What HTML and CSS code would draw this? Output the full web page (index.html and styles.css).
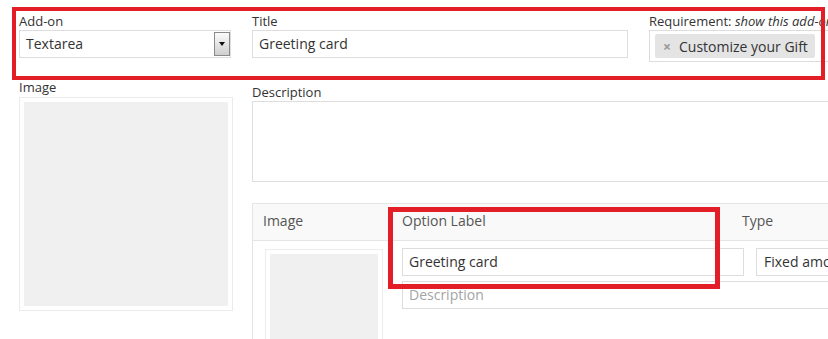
FILE: index.html
```html
<!DOCTYPE html>
<html lang="en">
<head>
  <meta charset="UTF-8" />
  <title>Product Add-ons</title>
  <link rel="stylesheet" href="styles.css">
</head>
<body>
  <div class="page">
    <div class="fila-top">
      <div class="campo campo-addon">
        <label>Add-on</label>
        <div class="select">
          <span>Textarea</span>
          <span class="flecha"><i></i></span>
        </div>
      </div>
      <div class="campo campo-title">
        <label>Title</label>
        <input type="text" value="Greeting card">
      </div>
      <div class="campo campo-req">
        <label>Requirement: <em>show this add-on if any of these are selected</em></label>
        <div class="tags">
          <span class="tag"><b>×</b>Customize your Gift</span>
        </div>
      </div>
    </div>

    <div class="fila-main">
      <div class="col-image">
        <label>Image</label>
        <div class="imgbox"><div></div></div>
      </div>
      <div class="col-main">
        <label>Description</label>
        <textarea></textarea>

        <!-- tabla de opciones -->
        <div class="opciones">
          <div class="opciones-head">
            <span class="th-img">Image</span>
            <span class="th-label">Option Label</span>
            <span>Type</span>
          </div>
          <div class="opciones-body">
            <div class="imgbox mini"><div></div></div>
            <div class="opcion-campos">
              <div class="opcion-fila">
                <input type="text" class="opcion-label" value="Greeting card">
                <div class="select tipo"><span>Fixed amount</span></div>
              </div>
              <input type="text" class="opcion-desc" placeholder="Description">
            </div>
          </div>
        </div>
      </div>
    </div>
  </div>

  <div class="marca marca-1"></div>
  <div class="marca marca-2"></div>
</body>
</html>
```

FILE: styles.css
```css
body {
  margin: 0;
  width: 828px;
  height: 339px;
  overflow: hidden;
  background: #fff;
  font-family: "Open Sans", sans-serif;
  color: #333;
}
.page {
  padding: 14px 0 0 19px;
  width: 1200px;
}
label {
  display: block;
  font-size: 13px;
  line-height: 14px;
  padding-bottom: 2px;
  color: #333;
  white-space: nowrap;
}
input, textarea {
  box-sizing: border-box;
  font-family: "Open Sans", sans-serif;
  font-size: 14px;
  color: #333;
  border: 1px solid #ddd;
  margin: 0;
  outline: none;
}
input {
  height: 28px;
  padding: 0 6px 2px;
}
input::placeholder {
  color: #a4a4a4;
}

.fila-top {
  display: flex;
  gap: 21px;
}
.campo-addon { width: 212px; }
.campo-title { width: 376px; }
.campo-title input { width: 100%; }
.campo-req { width: 400px; }

.select {
  box-sizing: border-box;
  height: 28px;
  border: 1px solid #ddd;
  display: flex;
  align-items: center;
  padding-left: 6px;
  font-size: 14px;
}
.select span:first-child {
  margin-top: -2px;
}
.select .flecha {
  margin-left: auto;
  width: 16px;
  height: 24px;
  box-sizing: border-box;
  border: 1px solid #8a8a8a;
  background: linear-gradient(#fbfbfb, #cfcfcf);
  display: flex;
  align-items: center;
  justify-content: center;
}
.select .flecha i {
  width: 0;
  height: 0;
  border-left: 3px solid transparent;
  border-right: 3px solid transparent;
  border-top: 4px solid #111;
}

.tags {
  box-sizing: border-box;
  height: 32px;
  border: 1px solid #ddd;
  padding: 3px 5px;
}
.tag {
  display: inline-flex;
  align-items: center;
  height: 24px;
  padding: 0 7px 0 8px;
  background: #e4e4e4;
  border-radius: 2px;
  font-size: 14px;
}
.tag b {
  color: #999;
  font-size: 14px;
  margin-right: 8px;
}

.fila-main {
  display: flex;
  gap: 20px;
  margin-top: 18px;
}
.col-image { width: 213px; }
.col-image label { padding-bottom: 3px; }
.imgbox {
  box-sizing: border-box;
  width: 214px;
  height: 214px;
  border: 1px solid #ebebeb;
  padding: 4px;
}
.imgbox div {
  width: 100%;
  height: 100%;
  background: #f0f0f0;
}
.col-main {
  padding-top: 5px;
  flex: 1;
}
textarea {
  display: block;
  width: 700px;
  height: 81px;
  resize: none;
}

.opciones {
  margin-top: 21px;
  border-top: 1px solid #e5e5e5;
  border-left: 1px solid #e5e5e5;
}
.opciones-head {
  display: flex;
  height: 36px;
  box-sizing: border-box;
  line-height: 34px;
  padding: 0 0 2px 10px;
  background: #f9f9f9;
  border-bottom: 1px solid #e5e5e5;
  font-size: 14px;
  color: #555;
}
.opciones-head {
  height: 37px;
}
.th-img { width: 139px; }
.th-label { width: 340px; }
.opciones-body {
  display: flex;
  padding: 7px 0 0 12px;
}
.imgbox.mini {
  width: 118px;
  height: 118px;
  margin-top: 1px;
  margin-right: 19px;
}
.opcion-fila {
  display: flex;
  gap: 12px;
}
.opcion-label { width: 342px; }
.select.tipo {
  width: 200px;
  padding-left: 7px;
}
.opcion-desc {
  display: block;
  width: 600px;
  margin-top: 5px;
}

/* recuadros rojos de anotación */
.marca {
  position: absolute;
  border: 4px solid #e31e26;
  box-sizing: border-box;
}
.marca-1 {
  left: 12px;
  top: 7px;
  width: 813px;
  height: 73px;
}
.marca-2 {
  left: 388px;
  top: 207px;
  width: 332px;
  height: 82px;
  border-width: 5px;
}
```
